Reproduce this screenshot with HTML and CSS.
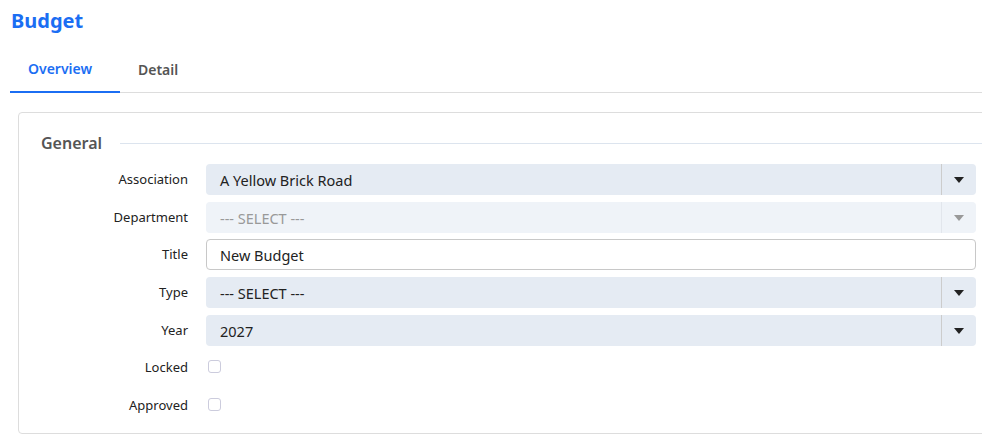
FILE: index.html
```html
<!DOCTYPE html>
<html>
<head>
<meta charset="utf-8">
<link rel="stylesheet" href="styles.css">
</head>
<body>
<div class="page">
  <h1 class="title">Budget</h1>
  <div class="tabs">
    <div class="tab active">Overview</div>
    <div class="tab">Detail</div>
    <div class="tab-rest"></div>
  </div>
  <div class="card">
    <div class="section-head">
      <span class="section-title">General</span>
      <span class="section-line"></span>
    </div>
    <div class="form">
      <label class="lbl">Association</label>
      <div class="select"><span class="val">A Yellow Brick Road</span><span class="arrow"><svg width="10" height="6" viewBox="0 0 10 6"><path d="M0 0H10L5 6Z" fill="#222"/></svg></span></div>

      <label class="lbl">Department</label>
      <div class="select disabled"><span class="val">--- SELECT ---</span><span class="arrow"><svg width="10" height="6" viewBox="0 0 10 6"><path d="M0 0H10L5 6Z" fill="#999"/></svg></span></div>

      <label class="lbl">Title</label>
      <div class="input"><span class="val">New Budget</span></div>

      <label class="lbl">Type</label>
      <div class="select"><span class="val">--- SELECT ---</span><span class="arrow"><svg width="10" height="6" viewBox="0 0 10 6"><path d="M0 0H10L5 6Z" fill="#222"/></svg></span></div>

      <label class="lbl">Year</label>
      <div class="select"><span class="val">2027</span><span class="arrow"><svg width="10" height="6" viewBox="0 0 10 6"><path d="M0 0H10L5 6Z" fill="#222"/></svg></span></div>

      <label class="lbl lbl-check">Locked</label>
      <div class="check-cell"><span class="check"></span></div>

      <label class="lbl lbl-check">Approved</label>
      <div class="check-cell"><span class="check"></span></div>
    </div>
  </div>
</div>
</body>
</html>
```
FILE: styles.css
```css
html, body {
  margin: 0;
  padding: 0;
  overflow: hidden;
  background: #fff;
}
body {
  font-family: "Noto Sans", "Open Sans", sans-serif;
  color: #222;
}
.page {
  padding: 7px 0 0 10px;
}
.title {
  margin: 0 0 0 1px;
  font-size: 20px;
  font-weight: 700;
  color: #1b6ef3;
  line-height: 28px;
}
.tabs {
  display: flex;
  margin-top: 13px;
  height: 45px;
}
.tab {
  font-size: 14px;
  font-weight: 600;
  color: #555;
  padding: 0 18px;
  line-height: 42px;
  border-bottom: 1px solid #ddd;
}
.tab.active {
  color: #1b6ef3;
  border-bottom: 2px solid #1b6ef3;
  width: 74px;
}
.tab-rest {
  flex: 1;
  border-bottom: 1px solid #ddd;
  margin-top: 2px;
  height: 42px;
}
.tabs .tab:not(.active) {
  padding-top: 2px;
  line-height: 40px;
}
.card {
  margin: 19px -40px 0 8px;
  border: 1px solid #ddd;
  border-radius: 4px;
  padding: 16px 45px 12px 22px;
  height: 292px;
}
.section-head {
  display: flex;
  align-items: center;
  gap: 14px;
  height: 28px;
  margin-right: -45px;
}
.section-title {
  font-size: 16px;
  font-weight: 600;
  color: #555;
  width: 65px;
}
.section-line {
  flex: 1;
  height: 1px;
  background: #dce4ee;
}
.form {
  display: grid;
  grid-template-columns: 147px 1fr;
  column-gap: 18px;
  row-gap: 7px;
  margin-top: 7px;
  grid-template-rows: 31px 30px 31px 31px 31px 31px 31px;
}
.lbl {
  font-size: 13px;
  text-align: right;
  line-height: 31px;
  color: #222;
}
.lbl-check {
  line-height: 29px;
}
.select, .input {
  display: flex;
  align-items: center;
  border-radius: 4px;
  font-size: 14.5px;
  height: 31px;
  box-sizing: border-box;
}
.select {
  background: #e5ebf3;
  color: #222;
}
.select.disabled {
  background: #eff3f8;
  color: #999;
}
.val {
  flex: 1;
  padding-left: 14px;
}
.arrow {
  width: 34px;
  height: 31px;
  border-left: 1px solid #ccc;
  display: flex;
  align-items: center;
  justify-content: center;
}
.select.disabled .arrow {
  border-left-color: #e2e6ec;
}
.input {
  background: #fff;
  border: 1px solid #c8c8c8;
}
.input .val {
  padding-left: 13px;
}
.check-cell {
  display: flex;
  align-items: center;
  padding-left: 2px;
}
.check {
  width: 11px;
  height: 11px;
  border: 1px solid #ccd;
  border-radius: 3px;
  margin-top: -5px;
}
```
